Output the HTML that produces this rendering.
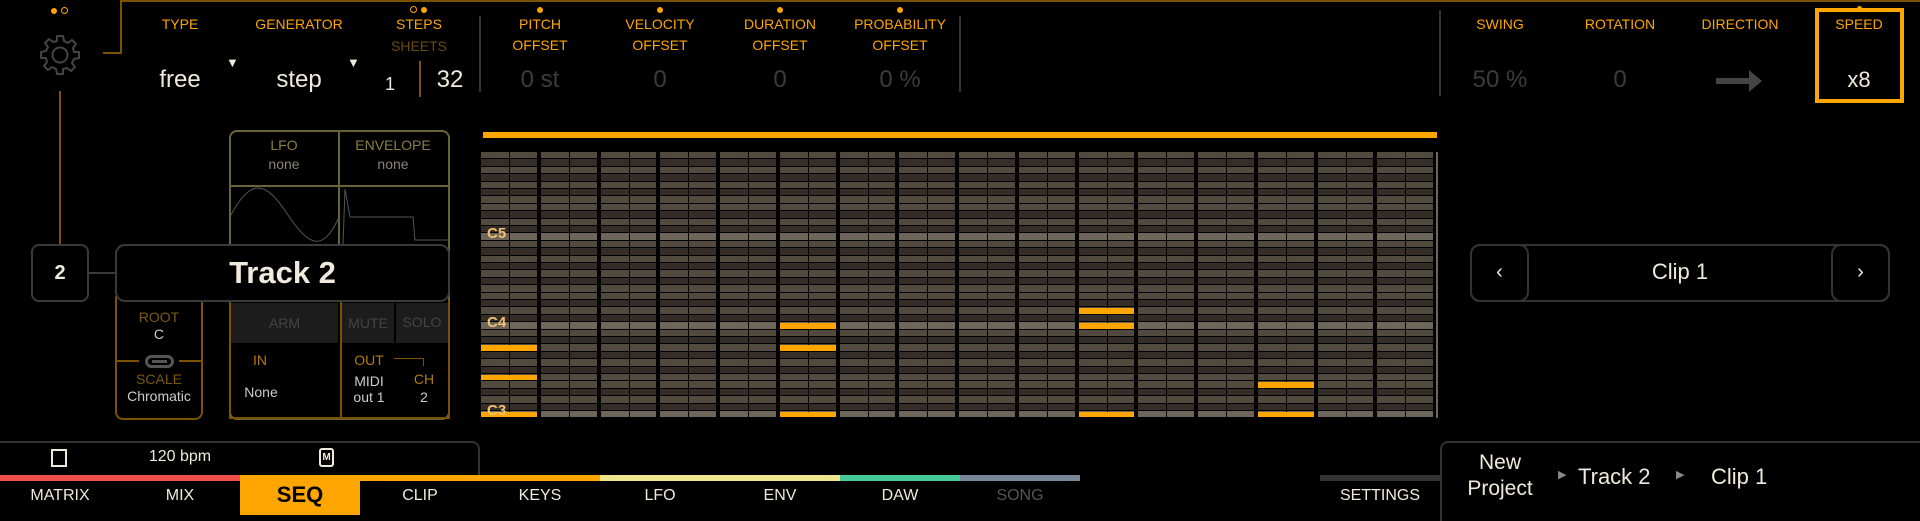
<!DOCTYPE html>
<html><head><meta charset="utf-8"><style>
*{margin:0;padding:0;box-sizing:border-box}
body{width:1920px;height:515px;background:#000;overflow:hidden;position:relative;font-family:"Liberation Sans",sans-serif;color:#f0eadc}
.a{position:absolute}
.lbl{position:absolute;color:#ffa500;font-size:14px;text-align:center;transform:translateX(-50%);white-space:nowrap;line-height:21px}
.val{position:absolute;font-size:24px;text-align:center;transform:translateX(-50%);white-space:nowrap}
.dot{position:absolute;width:6px;height:6px;border-radius:50%;background:#ffa500}
.hdot{position:absolute;width:7px;height:7px;border-radius:50%;border:1.5px solid #ffa500}
.tab{position:absolute;top:481px;width:120px;height:34px;text-align:center;font-size:16px;line-height:30px;color:#f0eadc}
.bar{position:absolute;top:475px;height:6px}
.cell{position:absolute}
</style></head><body>
<div class="a" style="left:120px;top:0;width:1800px;height:2px;background:#7a5200"></div>
<div class="a" style="left:120px;top:0;width:2px;height:54px;background:#7a5200"></div>
<div class="a" style="left:103px;top:52px;width:19px;height:2px;background:#7a5200"></div>
<div class="a" style="left:59px;top:91px;width:2px;height:154px;background:#7a5200"></div>
<div class="dot" style="left:51px;top:8px"></div><div class="hdot" style="left:61px;top:7px"></div>
<svg class="a" style="left:38px;top:33px" width="44" height="44" viewBox="-22 -22 44 44">
<path d="M-3,-19 L3,-19 L4,-14 L8,-12 L12,-15 L16,-11 L13,-7 L14,-3 L19,-3 L19,3 L14,4 L12,8 L15,12 L11,16 L7,13 L3,14 L3,19 L-3,19 L-4,14 L-8,12 L-12,15 L-16,11 L-13,7 L-14,3 L-19,3 L-19,-3 L-14,-4 L-12,-8 L-15,-12 L-11,-16 L-7,-13 L-3,-14 Z" fill="none" stroke="#444" stroke-width="2" stroke-linejoin="round"/>
<circle r="7.5" fill="none" stroke="#444" stroke-width="2"/></svg>

<div class="lbl" style="left:180px;top:14px">TYPE</div>
<div class="lbl" style="left:299px;top:14px">GENERATOR</div>
<div class="hdot" style="left:410px;top:6px"></div><div class="dot" style="left:421px;top:7px"></div>
<div class="lbl" style="left:419px;top:14px">STEPS</div>
<div class="lbl" style="left:419px;top:36px;color:#6b4a10">SHEETS</div>
<div class="val" style="left:180px;top:66px">free</div>
<div class="a" style="left:226px;top:55px;font-size:13px;color:#f0eadc">▼</div>
<div class="val" style="left:299px;top:66px">step</div>
<div class="a" style="left:347px;top:55px;font-size:13px;color:#f0eadc">▼</div>
<div class="val" style="left:390px;top:74px;font-size:18px">1</div>
<div class="a" style="left:419px;top:61px;width:2px;height:36px;background:#7a5200"></div>
<div class="val" style="left:450px;top:66px">32</div>
<div class="a" style="left:479px;top:16px;width:2px;height:76px;background:#333"></div>

<div class="dot" style="left:537px;top:7px"></div><div class="lbl" style="left:540px;top:14px">PITCH<br>OFFSET</div><div class="val" style="left:540px;top:66px;color:#3c3c3c">0 st</div>
<div class="dot" style="left:657px;top:7px"></div><div class="lbl" style="left:660px;top:14px">VELOCITY<br>OFFSET</div><div class="val" style="left:660px;top:66px;color:#3c3c3c">0</div>
<div class="dot" style="left:777px;top:7px"></div><div class="lbl" style="left:780px;top:14px">DURATION<br>OFFSET</div><div class="val" style="left:780px;top:66px;color:#3c3c3c">0</div>
<div class="dot" style="left:897px;top:7px"></div><div class="lbl" style="left:900px;top:14px">PROBABILITY<br>OFFSET</div><div class="val" style="left:900px;top:66px;color:#3c3c3c">0 %</div>
<div class="a" style="left:959px;top:16px;width:2px;height:76px;background:#333"></div>

<div class="a" style="left:1439px;top:10px;width:2px;height:86px;background:#333"></div>
<div class="lbl" style="left:1500px;top:14px">SWING</div><div class="val" style="left:1500px;top:66px;color:#3c3c3c">50 %</div>
<div class="lbl" style="left:1620px;top:14px">ROTATION</div><div class="val" style="left:1620px;top:66px;color:#3c3c3c">0</div>
<div class="lbl" style="left:1740px;top:14px">DIRECTION</div>
<svg class="a" style="left:1716px;top:70px" width="48" height="22"><rect x="0" y="8" width="34" height="6" fill="#444"/><path d="M33,0 L46,11 L33,22 Z" fill="#444"/></svg>
<div class="a" style="left:1815px;top:8px;width:89px;height:95px;border:4px solid #ffa500"></div>
<div class="dot" style="left:1857px;top:6px;width:5px;height:5px"></div>
<div class="lbl" style="left:1859px;top:14px">SPEED</div><div class="val" style="left:1859px;top:67px;font-size:22px">x8</div>

<div class="a" style="left:229px;top:130px;width:221px;height:290px;border:2px solid #6b6236;border-radius:8px"></div>
<div class="a" style="left:338px;top:130px;width:2px;height:120px;background:#6b6236"></div>
<div class="a" style="left:229px;top:185px;width:221px;height:2px;background:#6b6236"></div>
<div class="lbl" style="left:284px;top:136px;color:#8a7e45;line-height:19px">LFO<br><span style="color:#8a8478">none</span></div>
<div class="lbl" style="left:393px;top:136px;color:#8a7e45;line-height:19px">ENVELOPE<br><span style="color:#8a8478">none</span></div>
<svg class="a" style="left:231px;top:187px" width="218" height="60"><path d="M0,28 C20,-10 35,-5 55,25 C75,55 90,70 108,30" fill="none" stroke="#555" stroke-width="1"/><path d="M112,58 L114,2 L119,30 L182,30 L184,53 L218,53" fill="none" stroke="#555" stroke-width="1"/></svg>
<div class="a" style="left:231px;top:303px;width:107px;height:40px;background:#1c1c1c;color:#444;font-size:14px;text-align:center;line-height:40px">ARM</div>
<div class="a" style="left:340px;top:250px;width:2px;height:168px;background:#7a5200"></div>
<div class="a" style="left:342px;top:303px;width:52px;height:40px;background:#1c1c1c;color:#444;font-size:14px;text-align:center;line-height:40px">MUTE</div>
<div class="a" style="left:396px;top:303px;width:52px;height:40px;background:#1c1c1c;color:#444;font-size:14px;text-align:center;line-height:38px">SOLO</div>
<div class="a" style="left:229px;top:300px;width:2px;height:118px;background:#7a5200"></div>
<div class="a" style="left:448px;top:300px;width:2px;height:118px;background:#7a5200"></div>
<div class="a" style="left:229px;top:417px;width:221px;height:2px;background:#7a5200"></div>
<div class="lbl" style="left:260px;top:350px;color:#b07a10">IN</div>
<div class="lbl" style="left:261px;top:382px;color:#ccc">None</div>
<div class="lbl" style="left:369px;top:350px;color:#b07a10">OUT</div>
<div class="a" style="left:394px;top:358px;width:30px;height:8px;border-top:1px solid #7a5200;border-right:1px solid #7a5200"></div>
<div class="lbl" style="left:369px;top:373px;color:#ccc;line-height:16px">MIDI<br>out 1</div>
<div class="lbl" style="left:424px;top:370px;color:#b07a10;line-height:18px">CH<br><span style="color:#ccc">2</span></div>

<div class="a" style="left:115px;top:296px;width:88px;height:124px;border:2px solid #7a5200;border-top:none;border-radius:0 0 8px 8px"></div>
<div class="lbl" style="left:159px;top:309px;color:#7a5a10;line-height:17px">ROOT<br><span style="color:#ccc">C</span></div>
<div class="a" style="left:117px;top:360px;width:22px;height:2px;background:#7a5200"></div>
<div class="a" style="left:179px;top:360px;width:22px;height:2px;background:#7a5200"></div>
<div class="a" style="left:145px;top:355px;width:29px;height:13px;border:3px solid #555;border-radius:7px"></div>
<div class="a" style="left:152px;top:360px;width:15px;height:3px;background:#555"></div>
<div class="lbl" style="left:159px;top:371px;color:#7a5a10;line-height:17px">SCALE<br><span style="color:#ccc">Chromatic</span></div>

<div class="a" style="left:31px;top:244px;width:58px;height:58px;border:2px solid #3a3a3a;border-radius:8px;background:#000;font-size:20px;font-weight:bold;text-align:center;line-height:54px">2</div>
<div class="a" style="left:89px;top:272px;width:26px;height:2px;background:#3a3a3a"></div>
<div class="a" style="left:115px;top:244px;width:335px;height:58px;border:2px solid #3a3a3a;border-radius:10px;background:#000;font-size:31px;font-weight:bold;text-align:center;line-height:54px">Track 2</div>

<div class="a" style="left:1470px;top:244px;width:420px;height:58px;border:2px solid #333;border-radius:10px"></div>
<div class="a" style="left:1470px;top:244px;width:59px;height:58px;border:2px solid #333;border-radius:10px;font-size:20px;text-align:center;line-height:52px">‹</div>
<div class="a" style="left:1831px;top:244px;width:59px;height:58px;border:2px solid #333;border-radius:10px;font-size:20px;text-align:center;line-height:52px">›</div>
<div class="a" style="left:1529px;top:259px;width:302px;text-align:center;font-size:22px">Clip 1</div>

<div class="a" style="left:483px;top:132px;width:954px;height:6px;background:#ffa500"></div>
<div id="g" class="a" style="left:480px;top:152px;width:958px;height:267px;background:#000"></div>
<div class="a" style="left:1436px;top:152px;width:2px;height:266px;background:#6e665a"></div>

<div class="a" style="left:-4px;top:441px;width:484px;height:40px;border:2px solid #333;border-bottom:none;border-radius:0 8px 0 0"></div>
<div class="a" style="left:51px;top:449px;width:16px;height:18px;border:2px solid #f0eadc"></div>
<div class="a" style="left:140px;top:448px;width:80px;text-align:center;font-size:16px">120 bpm</div>
<div class="a" style="left:319px;top:448px;width:15px;height:19px;border:2px solid #f0eadc;border-radius:3px;font-size:10px;font-weight:bold;text-align:center;line-height:15px">M</div>
<div class="bar" style="left:0;width:240px;background:#f0504a"></div>
<div class="bar" style="left:240px;width:360px;background:#ffa500"></div>
<div class="bar" style="left:600px;width:240px;background:#ede68a"></div>
<div class="bar" style="left:840px;width:120px;background:#45c89a"></div>
<div class="bar" style="left:960px;width:120px;background:#778899"></div>
<div class="bar" style="left:1320px;width:120px;background:#333"></div>
<div class="tab" style="left:0">MATRIX</div>
<div class="tab" style="left:120px">MIX</div>
<div class="tab" style="left:240px;background:#ffa500;color:#000;font-weight:bold;font-size:22px;top:475px;height:40px;line-height:40px">SEQ</div>
<div class="tab" style="left:360px">CLIP</div>
<div class="tab" style="left:480px">KEYS</div>
<div class="tab" style="left:600px">LFO</div>
<div class="tab" style="left:720px">ENV</div>
<div class="tab" style="left:840px">DAW</div>
<div class="tab" style="left:960px;color:#555">SONG</div>
<div class="tab" style="left:1320px">SETTINGS</div>
<div class="a" style="left:1440px;top:441px;width:484px;height:80px;border:2px solid #333;border-right:none;border-bottom:none;border-radius:8px 0 0 0"></div>
<div class="a" style="left:1450px;top:450px;width:100px;text-align:center;font-size:21px;line-height:26px">New<br>Project</div>
<div class="a" style="left:1558px;top:468px;font-size:11px;color:#888">▶</div>
<div class="a" style="left:1578px;top:464px;font-size:22px">Track 2</div>
<div class="a" style="left:1676px;top:468px;font-size:11px;color:#888">▶</div>
<div class="a" style="left:1711px;top:464px;font-size:22px">Clip 1</div>

<script>
var g=document.getElementById('g'),h='';
var rh=7.4,cw=59.75;
var notes={0:[26,30,35],5:[23,26,35],10:[21,23,35],13:[31,35]};
for(var r=0;r<36;r++){var s=(35-r)%12;var black=[1,3,6,8,10].indexOf(s)>=0;
var col=s==0?'#6e665a':(black?'#352d27':'#524a3f');var y=Math.round(r*rh);var hh=Math.round((r+1)*rh)-y-1;
for(var c=0;c<16;c++){var x0=Math.round(c*cw)+1,x1=Math.round((c+1)*cw)-3,m=Math.round((x0+x1)/2);
h+='<div class="cell" style="left:'+x0+'px;top:'+y+'px;width:'+(m-x0)+'px;height:'+hh+'px;background:'+col+'"></div>';
h+='<div class="cell" style="left:'+(m+1)+'px;top:'+y+'px;width:'+(x1-m-1)+'px;height:'+hh+'px;background:'+col+'"></div>';
if(notes[c]&&notes[c].indexOf(r)>=0)h+='<div class="cell" style="left:'+x0+'px;top:'+(y+1)+'px;width:'+(x1-x0)+'px;height:'+(hh-1)+'px;background:#ffa500"></div>';}}
h+='<div class="cell" style="left:7px;top:73px;font-size:15px;font-weight:bold;color:#f0c070">C5</div>';
h+='<div class="cell" style="left:7px;top:162px;font-size:15px;font-weight:bold;color:#f0c070">C4</div>';
h+='<div class="cell" style="left:7px;top:250px;font-size:15px;font-weight:bold;color:#f0c070">C3</div>';
g.innerHTML=h;
</script>
</body></html>
